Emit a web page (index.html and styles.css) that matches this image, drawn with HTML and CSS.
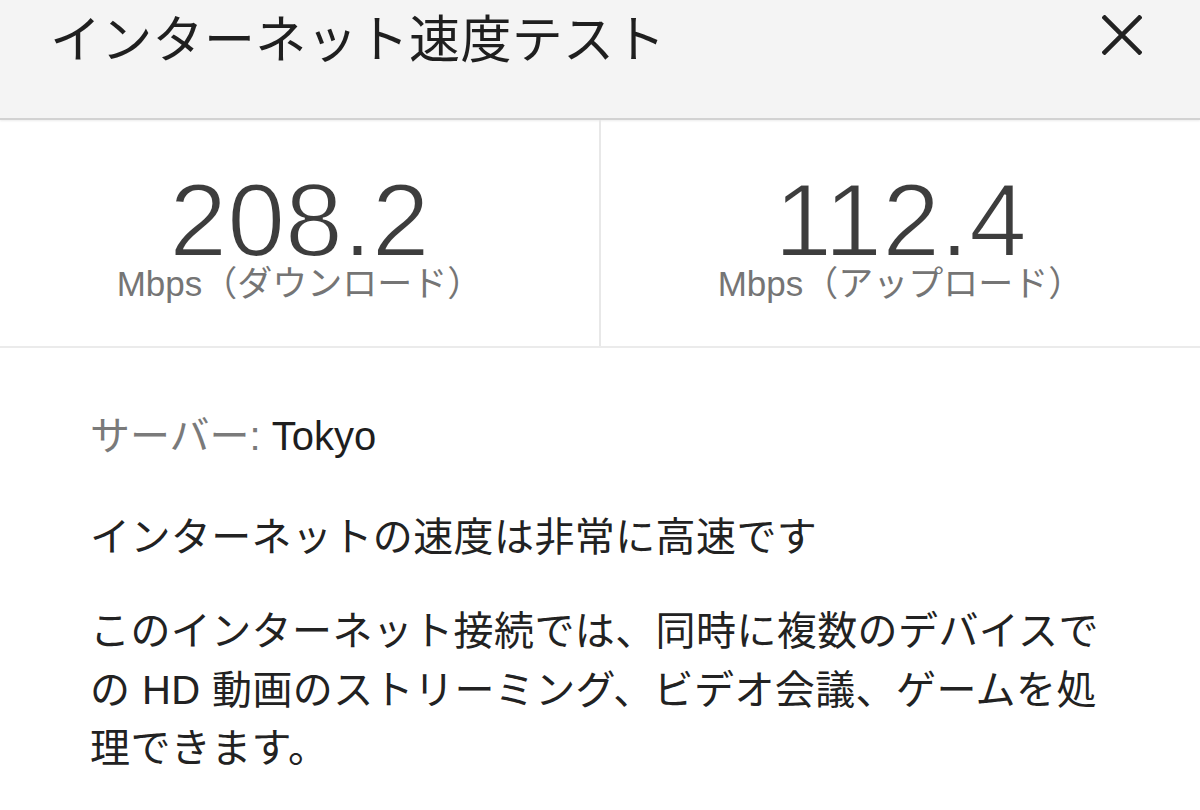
FILE: index.html
```html
<!DOCTYPE html>
<html lang="ja">

<head>
    <meta charset="UTF-8">
    <meta name="viewport" content="width=device-width, initial-scale=1.0">
    <title>インターネット速度テスト</title>
    <link rel="stylesheet" href="styles.css">
</head>

<body class="main">
    <div class="header">
        <h1 class="title">インターネット速度テスト</h1>
        <button class="btn-close" aria-label="閉じる">
            <svg width="40" height="40" viewBox="0 0 40 40">
                <path d="M1 1 L39 39 M39 1 L1 39" stroke="#222" stroke-width="4.5" fill="none" />
            </svg>
        </button>
    </div>

    <div class="stats">
        <div class="stat">
            <div class="stat-value">208.2</div>
            <div class="stat-label">Mbps（ダウンロード）</div>
        </div>
        <div class="stat">
            <div class="stat-value">112.4</div>
            <div class="stat-label">Mbps（アップロード）</div>
        </div>
    </div>

    <div class="details">
        <p class="server"><span class="server-label">サーバー:</span> Tokyo</p>
        <p class="summary">インターネットの速度は非常に高速です</p>
        <p class="description">このインターネット接続では、同時に複数のデバイスでの HD 動画のストリーミング、ビデオ会議、ゲームを処理できます。</p>
    </div>
</body>

</html>
```

FILE: styles.css
```css
.main {
    margin: 0;
    background-color: #fff;
    font-family: "Liberation Sans", "Noto Sans CJK JP", sans-serif;
    color: #222;
}

/* Top bar with the title and close button */
.header {
    display: flex;
    justify-content: space-between;
    align-items: flex-start;
    height: 120px;
    box-sizing: border-box;
    padding: 11px 58px 0 50px;
    background-color: #f4f4f4;
    border-bottom: 2px solid #d2d2d2;
    box-shadow: 0 1px 2px rgba(0, 0, 0, 0.08);
}

.title {
    margin: 0;
    font-size: 51px;
    font-weight: normal;
    line-height: 60px;
    letter-spacing: 0.3px;
    color: #1f1f1f;
}

.btn-close {
    margin-top: 4px;
    padding: 0;
    border: none;
    background: none;
    width: 40px;
    height: 40px;
    cursor: pointer;
}

.btn-close svg {
    display: block;
}

/* Two equal columns for download / upload */
.stats {
    display: grid;
    grid-template-columns: 599px 1fr;
    height: 228px;
    box-sizing: border-box;
    border-bottom: 2px solid #ebebeb;
}

.stat {
    padding-top: 58px;
    text-align: center;
}

.stat + .stat {
    border-left: 2px solid #e8e8e8;
}

/* thinner digits, closer to the light system font */
.stat-value {
    font-size: 104px;
    line-height: 84px;
    color: #3d3d3d;
    -webkit-text-stroke: 2px #fff;
}

.stat-label {
    margin-top: 2px;
    font-size: 35px;
    line-height: 40px;
    color: #757575;
}

.details {
    padding: 59px 90px 0 90px;
    font-size: 40px;
    line-height: 58.5px;
    letter-spacing: 0.4px;
}

.details p {
    margin: 0;
}

.server {
    color: #1e1e1e;
    letter-spacing: 0;
}

.server-label {
    color: #7a7a7a;
}

.summary {
    margin-top: 42px !important;
}

.description {
    margin-top: 36px !important;
}
```
